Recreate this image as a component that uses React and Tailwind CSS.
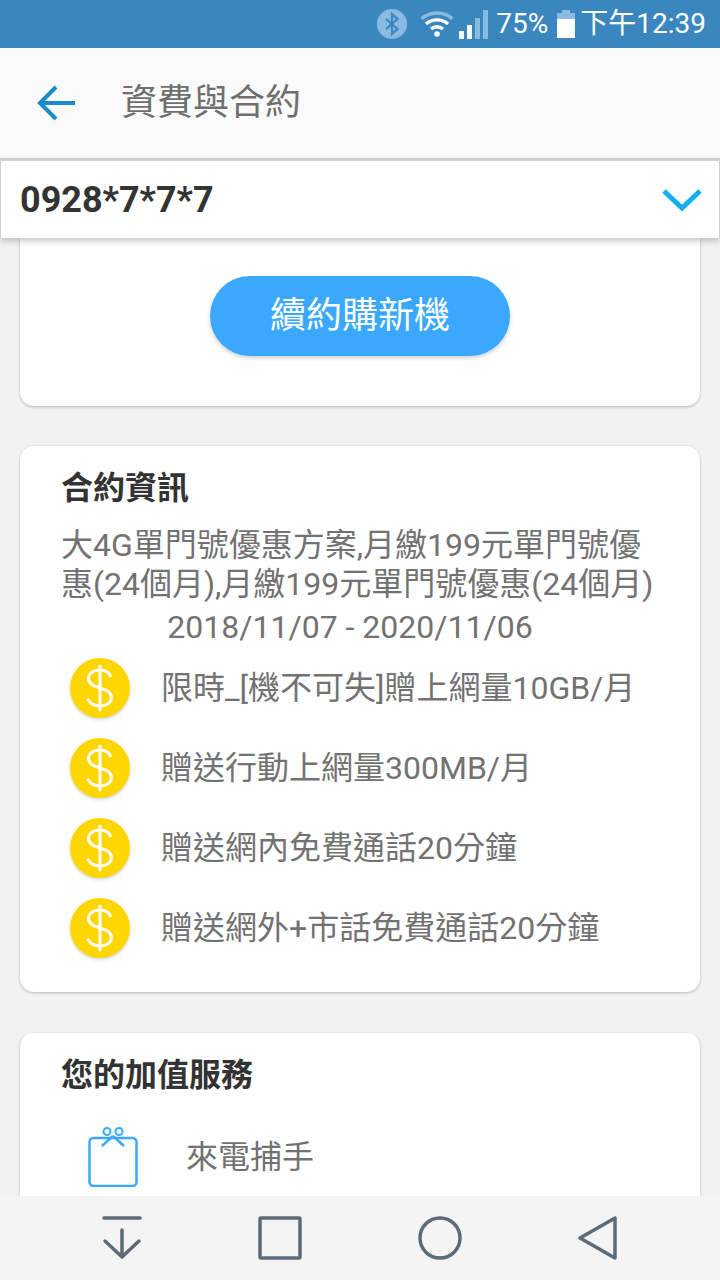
const benefits = [
  "限時_[機不可失]贈上網量10GB/月",
  "贈送行動上網量300MB/月",
  "贈送網內免費通話20分鐘",
  "贈送網外+市話免費通話20分鐘",
];

function StatusBar() {
  return (
    <div className="h-12 shrink-0 bg-[#3a87c0] flex items-center justify-end pr-[14px] text-white text-[28px] leading-none">
      <svg width="30" height="30" viewBox="0 0 30 30" className="mr-[13px]">
        <circle cx="15" cy="15" r="15" fill="#8abadd" />
        <path d="M9 10 L20.5 20 L15 25 V5 L20.5 10 L9 20" fill="none" stroke="#3a87c0" strokeWidth="2.2" />
      </svg>
      <svg width="34" height="26" viewBox="0 0 34 26" className="mr-[5px]">
        <path d="M1.5 8 C10 0 24 0 32.5 8" fill="none" stroke="#8abadd" strokeWidth="3.4" />
        <path d="M6 13 C12 7.5 22 7.5 28 13" fill="none" stroke="#fff" strokeWidth="3.4" />
        <path d="M11 18 C14.5 15 19.5 15 23 18" fill="none" stroke="#fff" strokeWidth="3.4" />
        <circle cx="17" cy="23" r="2.8" fill="#fff" />
      </svg>
      <svg width="29" height="29" viewBox="0 0 29 29" className="mr-[8px]">
        <rect x="0" y="21" width="5" height="8" fill="#fff" />
        <rect x="8" y="15" width="5" height="14" fill="#fff" />
        <rect x="16" y="8" width="5" height="21" fill="#8abadd" />
        <rect x="24" y="0" width="5" height="29" fill="#8abadd" />
      </svg>
      <span className="mr-[9px]">75%</span>
      <svg width="18" height="28" viewBox="0 0 18 28" className="mr-[5px]">
        <rect x="5" y="0" width="8" height="3" fill="#8abadd" />
        <rect x="0" y="3" width="18" height="6" fill="#8abadd" />
        <rect x="0" y="9" width="18" height="19" fill="#fff" />
      </svg>
      <span>下午12:39</span>
    </div>
  );
}

function Card({ title, className, children }) {
  return (
    <div className={`bg-white rounded-[14px] shadow-[0_1px_3px_rgba(0,0,0,0.25)] mx-5 ${className}`}>
      <div className="pl-[41px] text-[32px] leading-[38px] font-bold text-[#333333]">{title}</div>
      {children}
    </div>
  );
}

export default function App() {
  return (
    <div
      className="w-[720px] h-[1280px] flex flex-col overflow-hidden bg-[#f2f2f2]"
      style={{ fontFamily: 'Roboto, "Noto Sans CJK TC", sans-serif' }}
    >
      <StatusBar />

      <div className="h-[110px] shrink-0 bg-[#fafafa] flex items-center">
        <svg width="40" height="36" viewBox="0 0 40 36" className="ml-[37px]">
          <path d="M38 18 H3 M19 2 L3 18 L19 34" fill="none" stroke="#1a8ccb" strokeWidth="4" />
        </svg>
        <span className="ml-[44px] text-[36px] text-[#6f6f6f]">資費與合約</span>
      </div>

      <div className="relative z-10 h-[80px] shrink-0 bg-white border-t-[3px] border-x border-[#cfcfcf] border-b-0 shadow-[0_3px_6px_rgba(0,0,0,0.22)] flex items-center justify-between pl-[19px] pr-[16px]">
        <span className="text-[36px] font-bold text-[#333333]">0928*7*7*7</span>
        <svg width="42" height="24" viewBox="0 0 42 24">
          <path d="M3 3 L21 20 L39 3" fill="none" stroke="#12aef0" strokeWidth="5" />
        </svg>
      </div>

      <div className="flex-1 min-h-0 overflow-hidden">
        <div className="bg-white rounded-b-[14px] shadow-[0_1px_3px_rgba(0,0,0,0.25)] mx-5 h-[168px] pt-[38px] flex justify-center">
          <div className="w-[300px] h-[80px] rounded-full bg-[#3ba8ff] shadow-[0_2px_4px_rgba(0,0,0,0.2)] flex items-center justify-center text-white text-[36px]">
            續約購新機
          </div>
        </div>

        <Card title="合約資訊" className="mt-10 pt-[23px] h-[546px]">
          <div className="mt-[19px] pl-[41px] pr-[30px] text-[32px] leading-[39px] text-[#727272] whitespace-nowrap">
            <div>大4G單門號優惠方案,月繳199元單門號優</div>
            <div>惠(24個月),月繳199元單門號優惠(24個月)</div>
          </div>
          <div className="mt-[3px] pr-[20px] text-center text-[32px] leading-[40px] text-[#727272]">
            2018/11/07 - 2020/11/06
          </div>
          <div className="mt-[1px]">
            {benefits.map((text) => (
              <div key={text} className="h-[80px] flex items-center pl-[50px]">
                <div className="w-[60px] h-[60px] rounded-full bg-[#ffd600] shadow-[0_2px_3px_rgba(0,0,0,0.15)] flex items-center justify-center">
                  <svg width="30" height="48" viewBox="0 0 30 48">
                    <path
                      d="M26 13 C24 8 20 6 15 6 C8 6 3.500 9.500 3.500 14.500 C3.500 20 9 22 15 24 C21 26 26.500 28 26.500 33.500 C26.500 38.500 21.500 42 15 42 C9.500 42 5 39.500 2.500 35 M15 1 V47"
                      fill="none"
                      stroke="#fff"
                      strokeWidth="3"
                    />
                  </svg>
                </div>
                <span className="ml-[31px] text-[32px] text-[#727272] whitespace-nowrap">{text}</span>
              </div>
            ))}
          </div>
        </Card>

        <Card title="您的加值服務" className="mt-[41px] pt-[23px] h-[300px]">
          <div className="mt-[33px] ml-[68px] flex items-start">
            <svg width="50" height="60" viewBox="0 0 50 60">
              <rect x="1.500" y="11" width="47" height="48" rx="4" fill="none" stroke="#3ba8ff" strokeWidth="2.500" />
              <circle cx="19" cy="4.500" r="3.500" fill="#fff" stroke="#3ba8ff" strokeWidth="2" />
              <circle cx="31" cy="4.500" r="3.500" fill="#fff" stroke="#3ba8ff" strokeWidth="2" />
              <path d="M25 9 L14 19 M25 9 L36 19" fill="none" stroke="#3ba8ff" strokeWidth="2.500" />
            </svg>
            <span className="ml-[48px] mt-[6px] text-[32px] text-[#727272]">來電捕手</span>
          </div>
        </Card>
      </div>

      <div className="relative z-10 h-[84px] shrink-0 bg-[#f4f4f4] flex items-center">
        <div className="w-[720px] flex justify-between pl-[102px] pr-[102px]">
          <svg width="40" height="44" viewBox="0 0 40 44">
            <path d="M2 2 H38 M20 14 V41 M3 25 L20 41 L37 25" fill="none" stroke="#5c6b77" strokeWidth="3.500" strokeLinecap="round" strokeLinejoin="round" />
          </svg>
          <svg width="44" height="44" viewBox="0 0 44 44">
            <rect x="2" y="2" width="40" height="40" rx="1" fill="none" stroke="#5c6b77" strokeWidth="3.500" />
          </svg>
          <svg width="44" height="44" viewBox="0 0 44 44">
            <circle cx="22" cy="22" r="20" fill="none" stroke="#5c6b77" strokeWidth="3.500" />
          </svg>
          <svg width="40" height="44" viewBox="0 0 40 44">
            <path d="M37 2 V42 L2 22 Z" fill="none" stroke="#5c6b77" strokeWidth="3.500" strokeLinejoin="round" />
          </svg>
        </div>
      </div>
    </div>
  );
}
